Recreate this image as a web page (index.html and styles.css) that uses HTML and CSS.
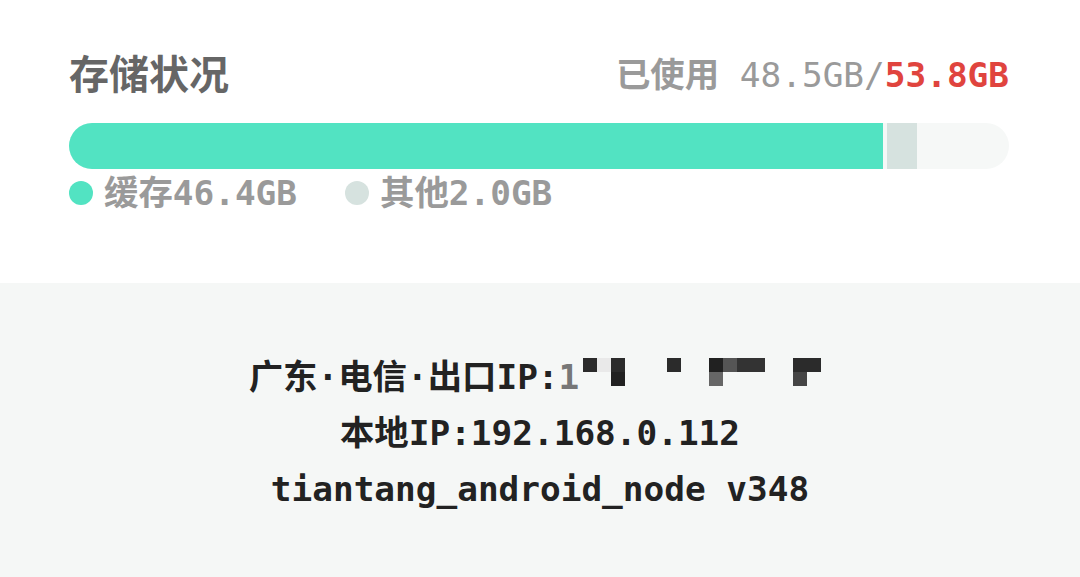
FILE: index.html
```html
<!DOCTYPE html>
<html lang="zh-CN">
<head>
<meta charset="utf-8">
<title>存储状况</title>
<link rel="stylesheet" href="styles.css">
</head>
<body>
<section class="storage">
  <div class="header">
    <h1 class="title">存储状况</h1>
    <div class="usage"><span class="usage-label">已使用</span> <span class="usage-used">48.5GB/</span><span class="usage-total">53.8GB</span></div>
  </div>
  <div class="bar">
    <div class="seg seg-cache" style="width:814px"></div>
    <div class="seg seg-other" style="width:30px"></div>
  </div>
  <div class="legend">
    <div class="legend-item"><span class="dot dot-cache"></span><span class="legend-text">缓存46.4GB</span></div>
    <div class="legend-item"><span class="dot dot-other"></span><span class="legend-text">其他2.0GB</span></div>
  </div>
</section>
<section class="info">
  <p class="line">广东·电信·出口IP:<span class="fade">1</span><span class="mosaic"><i class="m c0 r1 k1"></i><i class="m c1 r1 k2"></i><i class="m c2 r1 k1"></i><i class="m c2 r2 k3"></i><i class="m c6 r1 k1"></i><i class="m c9 r1 k3"></i><i class="m c9 r2 k4"></i><i class="m c10 r1 k5"></i><i class="m c11 r1 k6"></i><i class="m c12 r1 k6"></i><i class="m c15 r1 k1"></i><i class="m c16 r1 k1"></i><i class="m c15 r2 k7"></i></span></p>
  <p class="line">本地IP:192.168.0.112</p>
  <p class="line">tiantang_android_node v348</p>
</section>
</body>
</html>
```
FILE: styles.css
```css
* { box-sizing: border-box; }
html, body { margin: 0; padding: 0; }
body {
  width: 1080px;
  height: 577px;
  overflow: hidden;
  background: #ffffff;
  font-family: "DejaVu Sans Mono", "Noto Sans CJK SC", monospace;
}
.storage {
  height: 283px;
  padding: 50px 71px 0 69px;
  background: #ffffff;
}
.header {
  display: flex;
  justify-content: space-between;
  align-items: center;
  height: 50px;
}
.title {
  margin: 0;
  font-size: 40px;
  line-height: 50px;
  font-weight: bold;
  color: #666666;
}
.usage {
  font-size: 34.4px;
  line-height: 50px;
  color: #9a9a9a;
  white-space: pre;
}
.usage-label { font-weight: bold; }
.usage-used { font-weight: normal; }
.usage-total { font-weight: bold; color: #e0443e; }
.bar {
  margin-top: 23px;
  height: 46px;
  border-radius: 23px;
  background: #f6f8f7;
  display: flex;
  overflow: hidden;
}
.seg { height: 100%; }
.seg-cache { background: #52e3c2; }
.seg-other { background: #d6e2df; margin-left: 4px; }
.legend {
  display: flex;
  align-items: center;
  height: 48px;
  gap: 48px;
}
.legend-item {
  display: flex;
  align-items: center;
  gap: 11px;
}
.dot {
  width: 24px;
  height: 24px;
  border-radius: 50%;
}
.dot-cache { background: #52e3c2; }
.dot-other { background: #d6e2df; }
.legend-text {
  font-size: 34.4px;
  line-height: 48px;
  font-weight: bold;
  color: #9a9a9a;
}
.info {
  height: 294px;
  background: #f5f7f6;
  padding-top: 66px;
  text-align: center;
}
.line {
  margin: 0;
  font-size: 34.4px;
  line-height: 56px;
  font-weight: bold;
  color: #222222;
  white-space: pre;
}
.fade { color: #777777; }
.mosaic {
  display: inline-grid;
  grid-template-columns: repeat(17, 14px);
  grid-template-rows: repeat(2, 14px);
  vertical-align: top;
  margin: 9px 10px 0 4px;
}
.m { display: block; }
.c0 { grid-column: 1; } .c1 { grid-column: 2; } .c2 { grid-column: 3; }
.c6 { grid-column: 7; } .c9 { grid-column: 10; } .c10 { grid-column: 11; }
.c11 { grid-column: 12; } .c12 { grid-column: 13; } .c15 { grid-column: 16; }
.c16 { grid-column: 17; }
.r1 { grid-row: 1; } .r2 { grid-row: 2; }
.k1 { background: #2b2b2b; }
.k2 { background: #e9e9e9; }
.k3 { background: #212121; }
.k4 { background: #666666; }
.k5 { background: #555555; }
.k6 { background: #333333; }
.k7 { background: #454545; }
```
